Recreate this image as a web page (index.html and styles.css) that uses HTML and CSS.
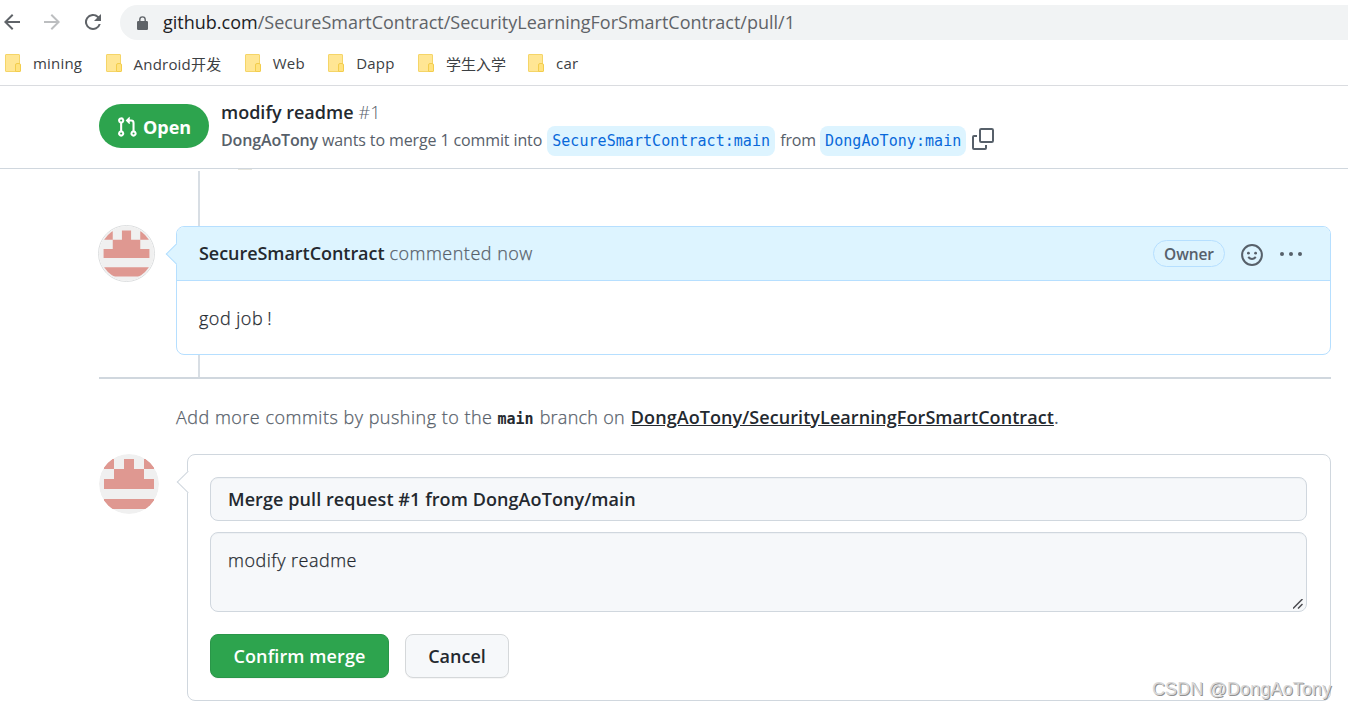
FILE: index.html
```html
<!DOCTYPE html>
<html lang="zh-CN">
<head>
	<meta charset="utf-8">
	<title>modify readme by DongAoTony · Pull Request #1</title>
	<link rel="stylesheet" href="styles.css">
</head>
<body>

<div class="toolbar">
	<svg class="navIcon" viewBox="0 0 24 24"><path d="M20 11H7.8l5.6-5.6L12 4l-8 8 8 8 1.4-1.4L7.8 13H20z"/></svg>
	<svg class="navIcon disabled" viewBox="0 0 24 24"><path d="M12 4l-1.4 1.4 5.6 5.6H4v2h12.2l-5.6 5.6L12 20l8-8z"/></svg>
	<svg class="navIcon reload" viewBox="0 0 24 24"><path d="M17.65 6.35A8 8 0 1 0 19.73 14h-2.08A6 6 0 1 1 12 6c1.66 0 3.14.69 4.22 1.78L13 11h7V4z"/></svg>
	<div class="omnibox">
		<svg class="lock" viewBox="0 0 11 14"><path d="M1.2 5h.9V3.6a3.4 3.4 0 0 1 6.8 0V5h.9Q11 5 11 6.2v6.6Q11 14 9.8 14H1.2Q0 14 0 12.8V6.2Q0 5 1.2 5zm2.3 0h4V3.6a2 2 0 0 0-4 0z"/></svg>
		<div class="url"><span class="domain">github.com</span>/SecureSmartContract/SecurityLearningForSmartContract/pull/1</div>
	</div>
</div>

<div class="bookmarks">
	<div class="bookmark"><i class="folder"></i>mining</div>
	<div class="bookmark"><i class="folder"></i>Android开发</div>
	<div class="bookmark"><i class="folder"></i>Web</div>
	<div class="bookmark"><i class="folder"></i>Dapp</div>
	<div class="bookmark cjk"><i class="folder"></i>学生入学</div>
	<div class="bookmark"><i class="folder"></i>car</div>
</div>

<div class="prHeader">
	<div class="state">
		<svg viewBox="0 0 16 16"><path fill-rule="evenodd" d="M7.177 3.073L9.573.677A.25.25 0 0110 .854v4.792a.25.25 0 01-.427.177L7.177 3.427a.25.25 0 010-.354zM3.75 2.5a.75.75 0 100 1.5.75.75 0 000-1.5zm-2.25.75a2.25 2.25 0 113 2.122v5.256a2.251 2.251 0 11-1.5 0V5.372A2.25 2.25 0 011.5 3.25zM11 2.5h-1V4h1a1 1 0 011 1v5.628a2.251 2.251 0 101.5 0V5A2.5 2.5 0 0011 2.5zm1 10.25a.75.75 0 111.5 0 .75.75 0 01-1.5 0zM3.75 12a.75.75 0 100 1.5.75.75 0 000-1.5z"/></svg>
		<span>Open</span>
	</div>
	<div class="prText">
		<div class="prTitle"><b>modify readme</b><span class="number">#1</span></div>
		<div class="prMeta">
			<b class="author">DongAoTony</b>
			<span class="wants">wants to merge 1 commit into</span>
			<span class="branch">SecureSmartContract:main</span>
			<span class="from">from</span>
			<span class="branch">DongAoTony:main</span>
			<svg class="copy" viewBox="0 0 22 22"><rect x="8" y="1" width="13" height="13" rx="1.2"/><path d="M5 8H2Q1 8 1 9v11q0 1 1 1h11q1 0 1-1v-3"/></svg>
		</div>
	</div>
</div>

<div class="timeline">
	<i class="sliver"></i>
	<svg class="avatar ring" viewBox="0 0 60 60">
		<circle class="avatarBg" cx="30" cy="30" r="30"/>
		<path d="M5 15V5h10v10zM25 5h10v10h10v10h10v10H5V25h10V15h10zM45 5h10v10H45zM5 45h50v10H5z" clip-path="url(#round)"/>
		<clipPath id="round"><circle cx="30" cy="30" r="28.6"/></clipPath>
	</svg>
	<div class="comment">
		<div class="commentHead">
			<b>SecureSmartContract</b>
			<span class="when">commented now</span>
			<span class="owner">Owner</span>
			<svg class="smile" viewBox="0 0 22 22"><circle cx="11" cy="11" r="9.9"/><path d="M7.2 13q3.8 4.2 7.6 0"/><circle class="dot" cx="7.4" cy="9.2" r="1.4"/><circle class="dot" cx="14.6" cy="9.2" r="1.4"/></svg>
			<svg class="kebab" viewBox="0 0 24 6"><circle cx="3" cy="3" r="2"/><circle cx="12" cy="3" r="2"/><circle cx="21" cy="3" r="2"/></svg>
		</div>
		<div class="commentBody">god job<span class="bang">!</span></div>
	</div>
</div>

<div class="hint">
	<span class="push">Add more commits by pushing to the</span>
	<code>main</code>
	<span class="on">branch on</span>
	<span><a>DongAoTony/SecurityLearningForSmartContract</a>.</span>
</div>

<div class="merge">
	<svg class="avatar" viewBox="0 0 60 60">
		<circle class="avatarBg" cx="30" cy="30" r="30"/>
		<path d="M5 15V5h10v10zM25 5h10v10h10v10h10v10H5V25h10V15h10zM45 5h10v10H45zM5 45h50v10H5z" clip-path="url(#round2)"/>
		<clipPath id="round2"><circle cx="30" cy="30" r="30"/></clipPath>
	</svg>
	<div class="mergeBox">
		<div class="field title">Merge pull request #1 from DongAoTony/main</div>
		<div class="field message">
			modify readme
			<svg class="grip" viewBox="0 0 10 10"><path d="M0 9.5L9.5 0M5 9.5L9.5 5"/></svg>
		</div>
		<div class="buttons">
			<div class="btn primary">Confirm merge</div>
			<div class="btn">Cancel</div>
		</div>
	</div>
</div>

<div class="watermark">CSDN @DongAoTony</div>

</body>
</html>
```
FILE: styles.css
```css
* {
	box-sizing: border-box;
}

body {
	margin: 0;
	width: 1348px;
	height: 709px;
	overflow: hidden;
	position: relative;
	background: #fff;
	color: #24292f;
	font-family: "Open Sans", "Noto Sans CJK SC", sans-serif;
	font-size: 18px;
	white-space: nowrap;
}

b {
	font-weight: 600;
}

svg {
	flex: none;
}

/* browser chrome */

.toolbar {
	display: flex;
	align-items: center;
	height: 45px;
}

.navIcon {
	width: 24px;
	height: 24px;
	margin: 0 16px 1px 0;
	fill: #5f6368;
}

.navIcon.disabled {
	fill: #bcbec0;
}

.navIcon.reload {
	margin: 0 15px 1px 1px;
}

.omnibox {
	flex: 1;
	display: flex;
	align-items: center;
	height: 35px;
	padding-left: 17px;
	border-radius: 18px 0 0 18px;
	background: #f1f3f4;
	color: #5f6368;
}

.lock {
	width: 11px;
	height: 14px;
	margin-right: 15px;
	fill: #5f6368;
}

.url {
	padding-bottom: 2px;
}

.domain {
	color: #202124;
}

.bookmarks {
	display: flex;
	align-items: center;
	height: 41px;
	padding: 0 0 4px 5px;
	border-bottom: 1px solid #dadce0;
	color: #3c4043;
	font-size: 15px;
	letter-spacing: 0.2px;
}

.bookmark {
	display: flex;
	align-items: center;
	margin-right: 23.4px;
}

.bookmark.cjk {
	margin-right: 22px;
	letter-spacing: 0;
}

.folder {
	position: relative;
	width: 15px;
	height: 18px;
	margin-right: 13px;
	border: 1px solid #f5d568;
	border-radius: 1px;
	background: #ffe694;
}

.folder::after {
	content: "";
	position: absolute;
	right: -2px;
	bottom: -1px;
	width: 4px;
	height: 7px;
	border: 1px solid #f3cd4c;
	border-radius: 2px 2px 1px 1px;
	background: #ffe27f;
}

/* pull request header */

.prHeader {
	display: flex;
	height: 83px;
	padding-left: 99px;
	border-bottom: 1px solid #d0d7de;
}

.state {
	display: flex;
	align-items: center;
	width: 110px;
	height: 44px;
	margin-top: 18px;
	padding: 2px 0 0 17px;
	border-radius: 22px;
	background: #2da44e;
	color: #fff;
	font-weight: 700;
}

.state svg {
	width: 22px;
	height: 22px;
	margin-right: 5px;
	fill: #fff;
}

.prText {
	margin: 13px 0 0 12px;
}

.prTitle {
	height: 27px;
	line-height: 27px;
}

.number {
	margin-left: 5px;
	color: #57606a;
	font-weight: 300;
}

.prMeta {
	display: flex;
	align-items: center;
	height: 30px;
	color: #57606a;
	font-size: 16px;
}

.author {
	margin: -3px 4px 0 0;
	letter-spacing: -0.14px;
}

.wants {
	margin: -2px 5px 0 0;
	letter-spacing: -0.12px;
}

.from {
	margin: -2px 4px 0 5px;
	letter-spacing: -0.1px;
}

.branch {
	height: 30px;
	padding: 0 5px;
	border-radius: 8px;
	background: #ddf4ff;
	color: #0969da;
	font: 15px/30px "DejaVu Sans Mono", monospace;
	letter-spacing: 0.05px;
}

.copy {
	width: 22px;
	height: 22px;
	margin: 0 0 4px 6px;
	fill: none;
	stroke: #57606a;
	stroke-width: 2;
}

/* timeline */

.timeline {
	position: relative;
	display: flex;
	height: 210px;
	margin: 0 17px 0 98px;
	padding-top: 56px;
}

.timeline::before {
	content: "";
	position: absolute;
	left: 100px;
	top: 2px;
	bottom: 1px;
	width: 2px;
	background: #d8dee4;
}

.timeline::after {
	content: "";
	position: absolute;
	left: 1px;
	right: 0;
	bottom: 0;
	height: 2px;
	background: #d0d7de;
}

.sliver {
	position: absolute;
	left: 140px;
	top: 0;
	width: 14px;
	height: 1px;
	background: #e6e6df;
}

.avatar {
	width: 60px;
	height: 60px;
	border-radius: 50%;
	fill: #df9891;
}

.avatar.ring {
	width: 57px;
	height: 57px;
	border: 1px solid #dcdedf;
}

.avatarBg {
	fill: #f0f0f0;
}

.comment {
	position: relative;
	width: 1155px;
	height: 129px;
	margin: 1px 0 0 21px;
	border: 1px solid #b6dfff;
	border-radius: 8px;
	background: #fff;
}

.comment::before, .mergeBox::before {
	content: "";
	position: absolute;
	left: -8px;
	top: 19px;
	width: 15px;
	height: 15px;
	border: solid #b6dfff;
	border-width: 0 0 1px 1px;
	background: #ddf4ff;
	transform: rotate(45deg);
}

.commentHead {
	position: relative;
	display: flex;
	align-items: center;
	height: 54px;
	padding: 0 27px 0 22px;
	border-bottom: 1px solid #b6dfff;
	border-radius: 7px 7px 0 0;
	background: #ddf4ff;
}

.commentHead b {
	margin: -2px 5px 0 0;
	letter-spacing: -0.05px;
}

/* light text, a touch heavier than the 300 weight */
.when, .commentBody, .push, .on, .message {
	font-weight: 300;
	letter-spacing: 0.5px;
	-webkit-text-stroke: 0.25px;
}

.when {
	margin-top: -2px;
	color: #57606a;
}

.owner {
	width: 72px;
	height: 27px;
	margin-left: auto;
	border: 1px solid #b6dfff;
	border-radius: 14px;
	color: #57606a;
	font-size: 15.5px;
	font-weight: 600;
	letter-spacing: -0.1px;
	line-height: 26px;
	text-align: center;
}

.smile {
	width: 22px;
	height: 22px;
	margin: 2px 16px 0;
	fill: none;
	stroke: #57606a;
	stroke-width: 2;
}

.smile .dot {
	fill: #57606a;
	stroke: none;
}

.kebab {
	width: 24px;
	height: 6px;
	fill: #57606a;
}

.commentBody {
	padding: 24px 22px;
	line-height: 27px;
}

.bang {
	margin-left: 4px;
}

/* merge form */

.hint {
	display: flex;
	align-items: baseline;
	height: 75px;
	padding: 25px 0 0 176px;
	color: #57606a;
	line-height: 27px;
}

.on {
	letter-spacing: 0.25px;
}

.hint code {
	margin: 0 6px 0 5px;
	color: #24292f;
	font: bold 15px "DejaVu Sans Mono", monospace;
}

.hint a {
	margin-left: 6px;
	color: #24292f;
	font-weight: 600;
	letter-spacing: 0.07px;
	text-decoration: underline;
}

.merge {
	display: flex;
	padding: 0 17px 0 99px;
}

.mergeBox {
	position: relative;
	width: 1144px;
	height: 247px;
	margin-left: 28px;
	padding: 22px;
	border: 1px solid #d0d7de;
	border-radius: 8px;
}

.mergeBox::before {
	border-color: #d0d7de;
	background: #fff;
}

.field {
	position: relative;
	width: 1097px;
	padding-left: 17px;
	border: 1px solid #d0d7de;
	border-radius: 8px;
	background: #f6f8fa;
	box-shadow: inset 0 1px 0 rgba(208, 215, 222, 0.2);
}

.field.title {
	height: 44px;
	font-weight: 600;
	letter-spacing: 0.08px;
	line-height: 42px;
}

.field.message {
	height: 80px;
	margin-top: 11px;
	padding-top: 14px;
	line-height: 27px;
}

.grip {
	position: absolute;
	right: 3px;
	bottom: 2px;
	width: 10px;
	height: 10px;
	fill: none;
	stroke: #4b4b50;
	stroke-width: 1.5;
}

.buttons {
	display: flex;
	gap: 16px;
	margin-top: 22px;
}

.btn {
	width: 104px;
	height: 44px;
	border: 1px solid #d5d8da;
	border-radius: 8px;
	background: #f6f8fa;
	box-shadow: 0 1px 0 rgba(27, 31, 36, 0.04);
	font-weight: 600;
	line-height: 42px;
	text-align: center;
}

.btn.primary {
	width: 179px;
	border-color: #2a9649;
	background: #2da44e;
	color: #fff;
	letter-spacing: 0.1px;
}

.watermark {
	position: absolute;
	left: 1152px;
	top: 676px;
	color: #d8d8d8;
	font: 18px/26px "Liberation Sans", sans-serif;
	letter-spacing: 0.12px;
	text-shadow: 1px 1px 0 #929292;
}
```
